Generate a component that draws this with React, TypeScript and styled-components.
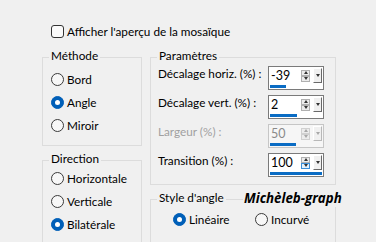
import React from 'react';
import styled, { createGlobalStyle } from 'styled-components';

const GlobalStyle = createGlobalStyle`
  html, body { margin: 0; padding: 0; background: #f0f0f0; }
  body {
    font-family: "Lato", "Segoe UI", sans-serif;
    font-size: 11.75px;
    color: #000;
  }
`;

const Page = styled.div`
  position: relative;
  width: 376px;
  height: 242px;
  overflow: hidden;
  box-sizing: border-box;
  padding: 25px 0 0 42px;
  display: flex;
  flex-direction: column;
  background: #f0f0f0;
`;

const CheckRow = styled.div`
  display: flex;
  align-items: center;
  gap: 3px;
  margin-left: 9px;
  height: 13px;
  line-height: 13px;
  white-space: nowrap;
`;

const CheckBox = styled.span`
  width: 13px;
  height: 13px;
  box-sizing: border-box;
  border: 1px solid #333;
  border-radius: 3px;
  background: #fbfbfb;
  flex: none;
`;

const Columns = styled.div`
  display: flex;
  gap: 8px;
  margin-top: 19px;
`;

const Column = styled.div<{ $width: number }>`
  width: ${p => p.$width}px;
  display: flex;
  flex-direction: column;
  gap: 14px;
`;

const Group = styled.div<{ $height: number }>`
  height: ${p => p.$height}px;
  box-sizing: border-box;
  border: 1px solid #dcdcdc;
  display: flex;
  flex-direction: column;
  flex: none;
`;

const Title = styled.span`
  align-self: flex-start;
  margin: -10px 0 0 6px;
  padding: 0 2px;
  line-height: 16px;
  background: #f0f0f0;
  white-space: nowrap;
`;

const RadioList = styled.div<{ $top: number }>`
  display: flex;
  flex-direction: column;
  padding: ${p => p.$top}px 0 0 8px;
`;

const RadioRow = styled.div`
  display: flex;
  padding: 2px 0 0 22px;
`;

const RadioItem = styled.div<{ $width?: number }>`
  display: flex;
  align-items: center;
  gap: 3px;
  height: 23px;
  white-space: nowrap;
  ${p => (p.$width ? `width: ${p.$width}px;` : '')}
`;

const Circle = styled.span<{ $on?: boolean }>`
  width: 13px;
  height: 13px;
  box-sizing: border-box;
  border-radius: 50%;
  flex: none;
  display: flex;
  align-items: center;
  justify-content: center;
  border: 1px solid ${p => (p.$on ? '#005fb8' : '#3a3a3a')};
  background: ${p => (p.$on ? '#005fb8' : '#f7f7f7')};
  &::after {
    content: '';
    display: ${p => (p.$on ? 'block' : 'none')};
    width: 5px;
    height: 5px;
    border-radius: 50%;
    background: #fff;
  }
`;

const ParamList = styled.div`
  display: flex;
  flex-direction: column;
  margin-top: -1px;
`;

const ParamRow = styled.div`
  height: 29px;
  display: flex;
  align-items: center;
  padding: 0 11px 0 7px;
`;

const ParamLabel = styled.span<{ $disabled?: boolean }>`
  flex: 1;
  margin-bottom: 8px;
  white-space: nowrap;
  color: ${p => (p.$disabled ? '#a0a0a0' : '#000')};
`;

const Spin = styled.div<{ $disabled?: boolean }>`
  width: 56px;
  height: 24px;
  box-sizing: border-box;
  border: 1px solid ${p => (p.$disabled ? '#c6c6c6' : '#7a7a7a')};
  background: ${p => (p.$disabled ? '#f6f6f6' : '#fff')};
  display: flex;
  flex-direction: column;
`;

const SpinTop = styled.div`
  flex: 1;
  display: flex;
  align-items: center;
  padding-left: 2px;
`;

const SpinValue = styled.span<{ $disabled?: boolean }>`
  flex: 1;
  font-size: 12.5px;
  line-height: 14px;
  color: ${p => (p.$disabled ? '#8a8a8a' : '#000')};
`;

const Steppers = styled.div`
  width: 9px;
  display: flex;
  flex-direction: column;
  margin-right: 3px;
`;

const StepBtn = styled.span<{ $hover?: boolean; $disabled?: boolean }>`
  height: 6px;
  box-sizing: border-box;
  border: 1px solid ${p => (p.$hover ? '#3c8fd8' : p.$disabled ? '#d0d0d0' : '#b0b0b0')};
  background: ${p => (p.$hover ? '#e5f1fb' : '#ececec')};
  display: flex;
  align-items: center;
  justify-content: center;
`;

const Tri = styled.span<{ $dir: 'up' | 'down'; $disabled?: boolean }>`
  width: 0;
  height: 0;
  border-left: 2.5px solid transparent;
  border-right: 2.5px solid transparent;
  ${p =>
    p.$dir === 'up'
      ? `border-bottom: 3px solid ${p.$disabled ? '#a8a8a8' : '#333'};`
      : `border-top: 3px solid ${p.$disabled ? '#a8a8a8' : '#333'};`}
`;

const DropBtn = styled.span<{ $disabled?: boolean }>`
  width: 9px;
  height: 15px;
  box-sizing: border-box;
  margin-right: 1px;
  border: 1px solid;
  border-color: #fff ${p => (p.$disabled ? '#b8b8b8' : '#696969')} ${p => (p.$disabled ? '#b8b8b8' : '#696969')} #fff;
  background: #f0f0f0;
  display: flex;
  align-items: center;
  justify-content: center;
`;

const BarTrack = styled.div`
  height: 3px;
  margin: 0 1px 1px 1px;
  display: flex;
`;

const BarFill = styled.div`
  height: 100%;
  background: #0a6cc4;
`;

const Watermark = styled.span`
  position: absolute;
  left: 243px;
  top: 190px;
  padding: 0 1px;
  background: #f0f0f0;
  font-family: "Open Sans", sans-serif;
  font-weight: 700;
  font-style: italic;
  font-size: 13.3px;
  line-height: 17px;
  white-space: nowrap;
`;

type SpinProps = { value: number; min: number; max: number; disabled?: boolean; hover?: boolean };

function SpinBox({ value, min, max, disabled, hover }: SpinProps) {
  const frac = (value - min) / (max - min);
  return (
    <Spin $disabled={disabled}>
      <SpinTop>
        <SpinValue $disabled={disabled}>{value}</SpinValue>
        <Steppers>
          <StepBtn $disabled={disabled}>
            <Tri $dir="up" $disabled={disabled} />
          </StepBtn>
          <StepBtn $disabled={disabled} $hover={hover}>
            <Tri $dir="down" $disabled={disabled} />
          </StepBtn>
        </Steppers>
        <DropBtn $disabled={disabled}>
          <Tri $dir="down" $disabled={disabled} />
        </DropBtn>
      </SpinTop>
      <BarTrack>
        <BarFill style={{ width: `${Math.round(frac * 52)}px` }} />
      </BarTrack>
    </Spin>
  );
}

function Radio({ label, on, width }: { label: string; on?: boolean; width?: number }) {
  return (
    <RadioItem $width={width}>
      <Circle $on={on} />
      <span>{label}</span>
    </RadioItem>
  );
}

export default function App() {
  return (
    <>
      <GlobalStyle />
      <Page>
        <CheckRow>
          <CheckBox />
          <span>Afficher l'aperçu de la mosaïque</span>
        </CheckRow>
        <Columns>
          <Column $width={100}>
            <Group $height={89}>
              <Title>Méthode</Title>
              <RadioList $top={4}>
                <Radio label="Bord" />
                <Radio label="Angle" on />
                <Radio label="Miroir" />
              </RadioList>
            </Group>
            <Group $height={120}>
              <Title>Direction</Title>
              <RadioList $top={0}>
                <Radio label="Horizontale" />
                <Radio label="Verticale" />
                <Radio label="Bilatérale" on />
              </RadioList>
            </Group>
          </Column>
          <Column $width={186}>
            <Group $height={128}>
              <Title>Paramètres</Title>
              <ParamList>
                <ParamRow>
                  <ParamLabel>Décalage horiz. (%) :</ParamLabel>
                  <SpinBox value={-39} min={-100} max={100} />
                </ParamRow>
                <ParamRow>
                  <ParamLabel>Décalage vert. (%) :</ParamLabel>
                  <SpinBox value={2} min={-100} max={100} />
                </ParamRow>
                <ParamRow>
                  <ParamLabel $disabled>Largeur (%) :</ParamLabel>
                  <SpinBox value={50} min={1} max={100} disabled />
                </ParamRow>
                <ParamRow>
                  <ParamLabel>Transition (%) :</ParamLabel>
                  <SpinBox value={100} min={0} max={100} hover />
                </ParamRow>
              </ParamList>
            </Group>
            <Group $height={80}>
              <Title>Style d'angle</Title>
              <RadioRow>
                <Radio label="Linéaire" on width={82} />
                <Radio label="Incurvé" />
              </RadioRow>
            </Group>
          </Column>
        </Columns>
        <Watermark>Michèleb-graph</Watermark>
      </Page>
    </>
  );
}
